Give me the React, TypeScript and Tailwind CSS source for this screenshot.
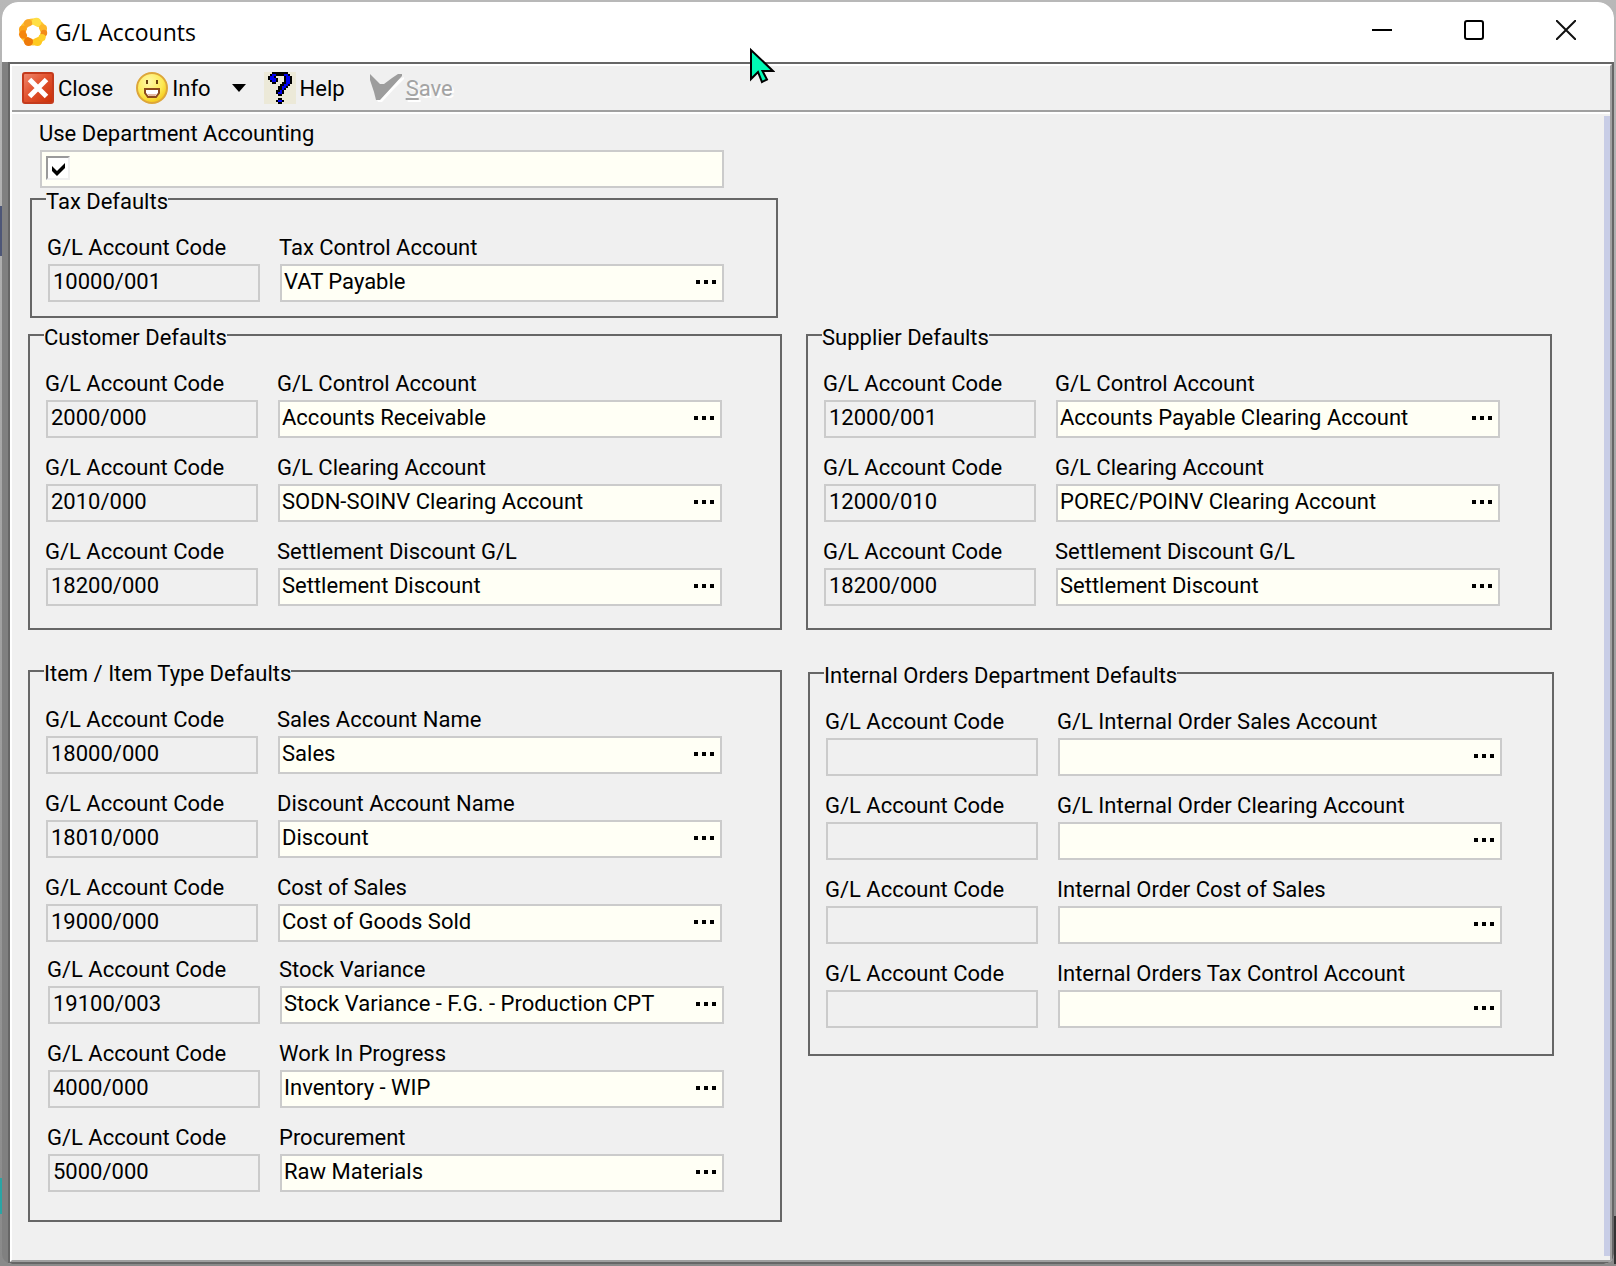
import React, { useId, useState } from "react";

type Row = { label: string; code: string; value: string };

const taxRows: Row[] = [{ label: "Tax Control Account", code: "10000/001", value: "VAT Payable" }];

const customerRows: Row[] = [
  { label: "G/L Control Account", code: "2000/000", value: "Accounts Receivable" },
  { label: "G/L Clearing Account", code: "2010/000", value: "SODN-SOINV Clearing Account" },
  { label: "Settlement Discount G/L", code: "18200/000", value: "Settlement Discount" },
];

const supplierRows: Row[] = [
  { label: "G/L Control Account", code: "12000/001", value: "Accounts Payable Clearing Account" },
  { label: "G/L Clearing Account", code: "12000/010", value: "POREC/POINV Clearing Account" },
  { label: "Settlement Discount G/L", code: "18200/000", value: "Settlement Discount" },
];

const itemRows: Row[] = [
  { label: "Sales Account Name", code: "18000/000", value: "Sales" },
  { label: "Discount Account Name", code: "18010/000", value: "Discount" },
  { label: "Cost of Sales", code: "19000/000", value: "Cost of Goods Sold" },
];

const stockRows: Row[] = [
  { label: "Stock Variance", code: "19100/003", value: "Stock Variance - F.G. - Production CPT" },
  { label: "Work In Progress", code: "4000/000", value: "Inventory - WIP" },
  { label: "Procurement", code: "5000/000", value: "Raw Materials" },
];

const internalRows: Row[] = [
  { label: "G/L Internal Order Sales Account", code: "", value: "" },
  { label: "G/L Internal Order Clearing Account", code: "", value: "" },
  { label: "Internal Order Cost of Sales", code: "", value: "" },
  { label: "Internal Orders Tax Control Account", code: "", value: "" },
];

function AccountRow({ row }: { row: Row }) {
  const id = useId();
  const [value, setValue] = useState(row.value);
  return (
    <div className="grid grid-cols-[212fr_444fr] gap-x-5">
      <div className="flex min-w-0 flex-col">
        <label htmlFor={id + "code"} className="-ml-px pb-0.5 leading-7 whitespace-nowrap">
          G/L Account Code
        </label>
        <input
          id={id + "code"}
          readOnly
          value={row.code}
          className="h-[38px] w-full min-w-0 border-2 border-[#cbcbcb] bg-[#f0f0f0] px-[3px] pb-[3px] outline-none"
        />
      </div>
      <div className="flex min-w-0 flex-col">
        <label htmlFor={id + "name"} className="-ml-px pb-0.5 leading-7 whitespace-nowrap">
          {row.label}
        </label>
        <div className="flex h-[38px] border-2 border-[#cbcbcb] bg-[#fffff5]">
          <input
            id={id + "name"}
            value={value}
            onChange={(e) => setValue(e.target.value)}
            className="min-w-0 flex-1 bg-transparent px-[2px] pb-[3px] outline-none"
          />
          <button type="button" aria-label={"Browse " + row.label} className="flex items-center gap-1 px-[6px] pb-0.5">
            <span className="size-1 bg-black" />
            <span className="size-1 bg-black" />
            <span className="size-1 bg-black" />
          </button>
        </div>
      </div>
    </div>
  );
}

function Rows({ rows }: { rows: Row[] }) {
  return (
    <div className="flex flex-col gap-4">
      {rows.map((r) => (
        <AccountRow key={r.label} row={r} />
      ))}
    </div>
  );
}

function Group({ title, className, children }: { title: string; className: string; children: React.ReactNode }) {
  return (
    <fieldset className={"min-w-0 border-2 border-[#666] pt-6 pl-4 " + className}>
      <legend className="-ml-0.5 pt-1.5 leading-4 whitespace-nowrap">{title}</legend>
      {children}
    </fieldset>
  );
}

function Logo() {
  return (
    <svg viewBox="0 0 30 30" className="size-[30px]" aria-hidden="true">
      <circle cx="15" cy="15" r="10.500" fill="none" stroke="#ffc52e" strokeWidth="6" />
      <circle cx="18.500" cy="5.500" r="4.800" fill="#ffdf45" />
      <circle cx="10" cy="6.500" r="4.200" fill="#f8a626" />
      <circle cx="25" cy="11.500" r="4" fill="#fdb82a" />
      <circle cx="26" cy="16" r="3.200" fill="#f28a18" />
      <circle cx="5" cy="12.500" r="4" fill="#fba41a" />
      <circle cx="5.200" cy="17.500" r="4.200" fill="#f5860e" />
      <circle cx="10.500" cy="24.500" r="4.600" fill="#ee7a0a" />
      <circle cx="19.500" cy="24.500" r="4.600" fill="#ffc91f" />
      <circle cx="24" cy="20.500" r="3.600" fill="#ffd02a" />
      <path d="M15 7.800l5.500 2.700 2 4.500-2.500 5-5 2.200-5-2.200L7.700 15l2.300-5z" fill="#fff" />
    </svg>
  );
}

function CloseIcon() {
  return (
    <svg viewBox="0 0 32 32" className="size-8" aria-hidden="true">
      <defs>
        <linearGradient id="red" x1="0" y1="0" x2="1" y2="1">
          <stop offset="0" stopColor="#f08a70" />
          <stop offset="0.45" stopColor="#e2532f" />
          <stop offset="1" stopColor="#c92e06" />
        </linearGradient>
      </defs>
      <rect x="1" y="1" width="30" height="30" rx="2" fill="url(#red)" stroke="#c43a1c" strokeWidth="2" />
      <path d="M7.500 7.500L24.500 24.500M24.500 7.500L7.500 24.500" stroke="#fff" strokeWidth="5" />
    </svg>
  );
}

function SmileIcon() {
  return (
    <svg viewBox="0 0 32 32" className="size-8" aria-hidden="true">
      <defs>
        <radialGradient id="sun" cx="0.4" cy="0.3" r="0.75">
          <stop offset="0" stopColor="#fff9a8" />
          <stop offset="0.6" stopColor="#fdea55" />
          <stop offset="1" stopColor="#f3c310" />
        </radialGradient>
      </defs>
      <circle cx="16" cy="16" r="15" fill="url(#sun)" stroke="#dda63a" strokeWidth="2" />
      <path d="M11 8v4M21 8v4" stroke="#6b4310" strokeWidth="2" />
      <path d="M9 17h14v4l-3 4h-8l-3-4z" fill="#fff" stroke="#8c4a1c" strokeWidth="2" />
      <path d="M11 22h10l-2 2h-6z" fill="#e6b8a0" />
    </svg>
  );
}

function HelpIcon() {
  return (
    <svg viewBox="0 0 32 32" className="size-8 bg-[#ece9d8]" shapeRendering="crispEdges" aria-hidden="true">
      <path
        d="M8 0h16v2h2v2h2v8h-2v2h-2v2h-2v2h-2v4h-2v2h-4v-2h-2v-4h2v-4h2v-2h2v-2h2V4h-8v2h2v4h-2v2H8v-2H6V8H4V4h2V2h2z"
        fill="#000"
      />
      <path d="M8 2h4v2h-2v2h2v4H8V8H6V4h2zM20 2h4v2h2v8h-2v2h-2v2h-2v2h-2v4h-4v-2h2v-2h2v-4h2v-2h2V4h-2z" fill="#0000f0" />
      <path d="M14 26h4v2h2v2h-2v2h-4v-2h-2v-2h2z" fill="#000" />
      <path d="M14 28h4v2h-4z" fill="#0000f0" />
    </svg>
  );
}

function SaveIcon() {
  return (
    <svg viewBox="0 0 34 28" className="h-7 w-[34px]" aria-hidden="true">
      <path d="M2 3l10 9 4 0L34 3v2L24 15 12 28H8L6 24z" fill="#fff" />
      <path d="M0 0l2 2 8 8h4l8-6 6-4h4v2L22 13 10 26H6L4 18 0 6z" fill="#9d9d9d" />
    </svg>
  );
}

export default function App() {
  const [dept, setDept] = useState(true);
  return (
    <div className="flex min-h-screen flex-col bg-gradient-to-b from-[#b8b8b8] to-[#8a8a8a] pt-0.5 pb-0.5 font-['Roboto',sans-serif] text-[22px] text-black">
      <div className="flex flex-1">
        <div className="flex w-0.5 flex-col">
          <div className="h-[204px]" />
          <div className="h-[50px] bg-[#4d5677]" />
          <div className="flex-1" />
          <div className="h-9 bg-[#2aa5a5]" />
          <div className="h-[50px]" />
        </div>
        <div className="flex min-w-0 flex-1 flex-col overflow-hidden rounded-t-2xl rounded-b-[10px] bg-[#808080]">
          <header className="flex h-[60px] items-center bg-white pr-0.5 pl-4">
            <Logo />
            <h1 className="flex-1 pl-[7px] font-['Open_Sans',sans-serif] text-[23px] font-normal">G/L Accounts</h1>
            <button type="button" aria-label="Minimize" className="flex h-14 w-[92px] items-center justify-center self-start">
              <svg viewBox="0 0 20 20" className="size-5"><path d="M0 10h20" stroke="#000" strokeWidth="2" /></svg>
            </button>
            <button type="button" aria-label="Maximize" className="flex h-14 w-[92px] items-center justify-center self-start">
              <svg viewBox="0 0 20 20" className="size-5"><rect x="1" y="1" width="18" height="18" rx="2" fill="none" stroke="#000" strokeWidth="2" /></svg>
            </button>
            <button type="button" aria-label="Close window" className="flex h-14 w-[92px] items-center justify-center self-start">
              <svg viewBox="0 0 20 20" className="size-5"><path d="M0 0l20 20M20 0L0 20" stroke="#111" strokeWidth="2" /></svg>
            </button>
          </header>

          <div className="ml-[6px] flex flex-1 flex-col border-2 border-[#666] bg-[#f0f0f0]">
            <div className="flex flex-1 flex-col border-2 border-t-white border-r-[#a0a0a0] border-b-[#a0a0a0] border-l-white">
              <nav className="flex h-[46px] items-center border-b-2 border-[#a0a0a0] pl-[10px]">
                <button type="button" className="flex items-center gap-1">
                  <CloseIcon />
                  Close
                </button>
                <button type="button" className="ml-[23px] flex items-center gap-1">
                  <SmileIcon />
                  Info
                </button>
                <button type="button" aria-label="More info" className="ml-[21px]">
                  <svg viewBox="0 0 14 8" className="h-2 w-[14px]"><path d="M0 0h14L7 8z" fill="#000" /></svg>
                </button>
                <button type="button" className="ml-[18px] flex items-center gap-1">
                  <HelpIcon />
                  Help
                </button>
                <button
                  type="button"
                  disabled
                  className="ml-[25px] flex items-center gap-0.5 text-[#a3a3a3] [text-shadow:2px_2px_0_#fff]"
                >
                  <SaveIcon />
                  <span><u>S</u>ave</span>
                </button>
              </nav>

              <div className="flex flex-1 border-t-2 border-white">
                <main className="min-w-0 flex-1 pt-[6px] pr-[50px] pb-9 pl-4">
                  <div className="grid grid-cols-[754fr_748fr] items-start gap-x-6">
                    <div className="flex flex-col">
                      <div className="mr-[58px] ml-3 flex flex-col">
                        <label htmlFor="dept" className="-ml-px pb-0.5 leading-7">Use Department Accounting</label>
                        <div className="flex h-[38px] items-center border-2 border-[#cbcbcb] bg-[#fffff5] pb-0.5 pl-1">
                          <span className="grid size-6 border-2 border-t-[#9a9a9a] border-r-[#f0f0f0] border-b-[#f0f0f0] border-l-[#9a9a9a] bg-white">
                            <input
                              id="dept"
                              type="checkbox"
                              checked={dept}
                              onChange={(e) => setDept(e.target.checked)}
                              className="peer col-start-1 row-start-1 size-5 appearance-none"
                            />
                            <svg
                              viewBox="0 0 20 20"
                              className="pointer-events-none invisible col-start-1 row-start-1 size-5 peer-checked:visible"
                              aria-hidden="true"
                            >
                              <path d="M4 8l5 5 8-8v5l-8 8-5-5z" fill="#000" />
                            </svg>
                          </span>
                        </div>
                      </div>
                      <Group title="Tax Defaults" className="mr-1 ml-0.5 pr-[52px] pb-[14px]">
                        <Rows rows={taxRows} />
                      </Group>
                    </div>
                  </div>

                  <div className="mt-[6px] grid grid-cols-[754fr_748fr] items-start gap-x-6 gap-y-[30px]">
                    <Group title="Customer Defaults" className="pr-[58px] pb-[22px]">
                      <Rows rows={customerRows} />
                    </Group>
                    <Group title="Supplier Defaults" className="mr-0.5 pr-[50px] pb-[22px]">
                      <Rows rows={supplierRows} />
                    </Group>
                    <Group title="Item / Item Type Defaults" className="pr-14 pb-7">
                      <div className="flex flex-col gap-[14px]">
                        <div className="pr-0.5">
                          <Rows rows={itemRows} />
                        </div>
                        <div className="pl-0.5">
                          <Rows rows={stockRows} />
                        </div>
                      </div>
                    </Group>
                    <Group title="Internal Orders Department Defaults" className="mt-0.5 ml-0.5 pr-[50px] pb-[26px]">
                      <Rows rows={internalRows} />
                    </Group>
                  </div>
                </main>
                <div className="mt-0.5 mb-1 w-[6px] bg-[#c8cde6]" />
              </div>
            </div>
          </div>
        </div>
        <div className="flex w-0.5 flex-col">
          <div className="flex-1" />
          <div className="h-12 bg-[#333]" />
        </div>
      </div>

      <svg viewBox="0 0 26 38" className="pointer-events-none absolute top-[47px] left-[749px] h-[38px] w-[26px]" aria-hidden="true">
        <path d="M2 3v29l7-7 4 10 5-2.500-4.500-8.500H24z" fill="#00f9b4" stroke="#000" strokeWidth="2" />
      </svg>
    </div>
  );
}
